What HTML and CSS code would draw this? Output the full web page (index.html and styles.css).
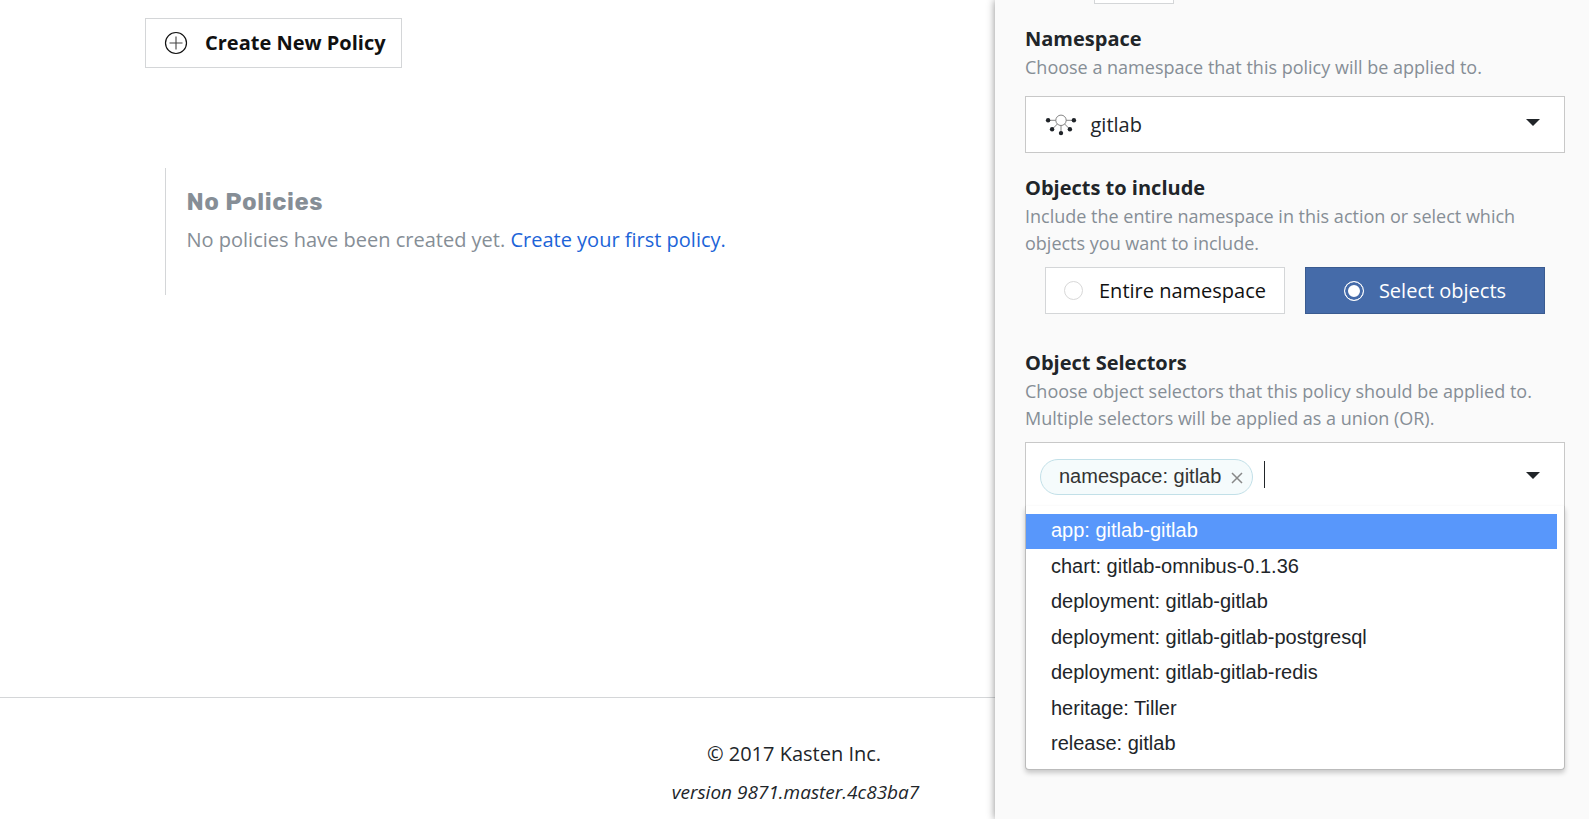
FILE: index.html
```html
<!DOCTYPE html>
<html lang="en">
<head>
<meta charset="utf-8">
<title>Policies</title>
<link rel="stylesheet" href="styles.css">
</head>
<body>
<div class="page">
  <main class="main">
    <button class="create-btn">
      <svg class="plus" width="24" height="24" viewBox="0 0 24 24"><circle cx="12" cy="12" r="10.5" fill="none" stroke="#111" stroke-width="1.2"/><path d="M12 5.5v13M5.5 12h13" stroke="#444" stroke-width="1.1"/></svg>
      <span class="create-label">Create New Policy</span>
    </button>
    <section class="empty">
      <h2 class="empty-title"><span>No Policies</span></h2>
      <p class="empty-text"><span class="empty-note">No policies have been created yet.</span> <a class="link">Create your first policy.</a></p>
    </section>
  </main>
  <footer class="footer">
    <p class="copyright"><span>© 2017 Kasten Inc.</span></p>
    <p class="version"><span>version 9871.master.4c83ba7</span></p>
  </footer>
</div>

<aside class="panel">
  <div class="stub"></div>
  <section class="field field-namespace">
    <h3 class="label"><span>Namespace</span></h3>
    <p class="hint">Choose a namespace that this policy will be applied to.</p>
    <div class="select">
      <svg class="ns-icon" width="32" height="24" viewBox="0 0 32 24">
        <g fill="none" stroke="#777" stroke-width=".9"><circle cx="16" cy="7.3" r="5.200"/><path d="M3 7.3h7.800M21.200 7.3h7.800M12.400 11l-5.300 5.300M19.600 11l5.300 5.300M16 12.500v7.500"/></g>
        <g fill="#1f2328"><circle cx="3.100" cy="7.300" r="2.200"/><circle cx="28.900" cy="7.300" r="2.200"/><circle cx="7.100" cy="16.300" r="2.200"/><circle cx="24.900" cy="16.300" r="2.200"/><circle cx="16" cy="20.100" r="2.200"/></g>
      </svg>
      <span class="select-value">gitlab</span>
      <span class="caret"></span>
    </div>
  </section>

  <section class="field field-objects">
    <h3 class="label"><span>Objects to include</span></h3>
    <p class="hint">Include the entire namespace in this action or select which<br>objects you want to include.</p>
    <div class="choices">
      <button class="choice"><span class="radio"></span><span>Entire namespace</span></button>
      <button class="choice active"><span class="radio"></span><span>Select objects</span></button>
    </div>
  </section>

  <section class="field field-selectors">
    <h3 class="label"><span>Object Selectors</span></h3>
    <p class="hint">Choose object selectors that this policy should be applied to.<br>Multiple selectors will be applied as a union (OR).</p>
    <div class="multi">
      <span class="tag"><span class="tag-text">namespace: gitlab</span><svg width="12" height="12" viewBox="0 0 12 12"><path d="M1 1l10 10M11 1L1 11" stroke="#888" stroke-width="1.500"/></svg></span>
      <span class="cursor"></span>
      <span class="caret"></span>
    </div>
    <ul class="menu">
      <li class="item selected"><span>app: gitlab-gitlab</span></li>
      <li class="item"><span>chart: gitlab-omnibus-0.1.36</span></li>
      <li class="item"><span>deployment: gitlab-gitlab</span></li>
      <li class="item"><span>deployment: gitlab-gitlab-postgresql</span></li>
      <li class="item"><span>deployment: gitlab-gitlab-redis</span></li>
      <li class="item"><span>heritage: Tiller</span></li>
      <li class="item"><span>release: gitlab</span></li>
    </ul>
  </section>
</aside>
</body>
</html>
```

FILE: styles.css
```css
* { box-sizing: border-box; margin: 0; padding: 0; }
body {
  width: 1589px;
  height: 819px;
  overflow: hidden;
  background: #fff;
  color: #212529;
  font-family: "Open Sans", "Noto Sans", sans-serif;
  font-size: 20px;
  line-height: 30px;
}
button { font: inherit; color: #111; background: #fff; border: 1px solid #d4d6d8; }
.page { display: flex; flex-direction: column; height: 819px; }
.main { flex: none; height: 697px; padding: 18px 0 0 145px; }
.create-btn { display: flex; align-items: center; width: 257px; height: 50px; padding-left: 18px; gap: 17px; font-weight: 700; white-space: nowrap; }
.plus { flex: none; }
.empty { margin: 100px 0 0 20px; height: 127px; padding: 17px 0 0 20.5px; border-left: 1px solid #d4d6d8; color: #868e96; }
.empty-title { font-family: Rubik, Inter, sans-serif; font-size: 24px; line-height: 34px; font-weight: 700; letter-spacing: .6px; }
.empty-text { margin-top: 6px; line-height: 30px; white-space: nowrap; }
.link { color: #1c64d8; }
.footer { flex: 1; border-top: 1px solid #d4d6d8; padding-top: 41px; text-align: center; }
.copyright { margin-left: -1px; }
.version { margin: 9px 0 0 2px; font-size: 19px; font-style: italic; line-height: 29px; }

/* Side panel sliding over the page */
.panel {
  position: absolute;
  top: 0;
  right: 0;
  width: 594px;
  height: 819px;
  padding: 0 25px 0 30px;
  background: #fafafa;
  box-shadow: 0 0 8px rgba(0, 0, 0, .45);
}
.stub { width: 80px; height: 4px; margin-left: 69px; background: #fff; border: 1px solid #d4d6d8; border-top: 0; }
.field { width: 540px; }
.field-namespace { margin-top: 20px; }
.field-objects { margin-top: 20px; }
.field-selectors { margin-top: 34px; }
.label { font-size: 20px; line-height: 30px; font-weight: 700; }
.hint { font-size: 18px; line-height: 27px; color: #868e96; white-space: nowrap; }
.select { display: flex; align-items: center; margin-top: 15px; height: 57px; padding: 0 24px 0 19px; background: #fff; border: 1px solid #c8c8c8; }
.ns-icon { margin-top: 1px; }
.select-value { margin-left: 13.5px; }
.caret { margin-left: auto; border: 7px solid transparent; border-top-color: #212529; border-bottom: 0; margin-bottom: 4px; }
.multi .caret { margin-bottom: 2px; }
.choices { display: flex; gap: 20px; margin: 10px 20px 0; }
.choice { flex: 1; display: flex; align-items: center; justify-content: center; height: 47px; gap: 16px; white-space: nowrap; }
.choice.active { gap: 15px; background: #456ba9; border-color: #3a5b90; color: #fff; }
.radio { flex: none; width: 19px; height: 19px; border: 1px solid #d8d8d8; border-radius: 50%; }
.active .radio { width: 20px; height: 20px; border-color: #fff; background: #fff; border-width: 1px; box-shadow: inset 0 0 0 3px #456ba9; }
.multi { display: flex; align-items: center; margin-top: 10px; height: 64px; padding: 4px 24px 0 14px; background: #fff; border: 1px solid #c8c8c8; border-bottom: 0; }
.tag { display: flex; align-items: center; height: 36px; width: 213px; padding: 0 9px 2px 18px; justify-content: space-between; border: 1px solid #c2e0e8; border-radius: 18px; background: #f5fbfc; color: #333; font-family: "Liberation Sans", sans-serif; white-space: nowrap; }
.tag svg { margin-top: 5px; }
.cursor { width: 1px; height: 27px; margin: -4px 0 0 11px; background: #212529; }
.menu {
  list-style: none;
  height: 264px;
  padding: 8px 7px 0 0;
  background: #fff;
  border: 1px solid #bbb;
  border-top: 0;
  border-radius: 0 0 4px 4px;
  box-shadow: 0 3px 5px rgba(0, 0, 0, .2);
  font-family: "Liberation Sans", sans-serif;
}
.item { height: 35.5px; padding-left: 25px; line-height: 32px; white-space: nowrap; }
.item.selected { height: 35px; margin-bottom: .5px; background: #5897fb; color: #fff; }
```
